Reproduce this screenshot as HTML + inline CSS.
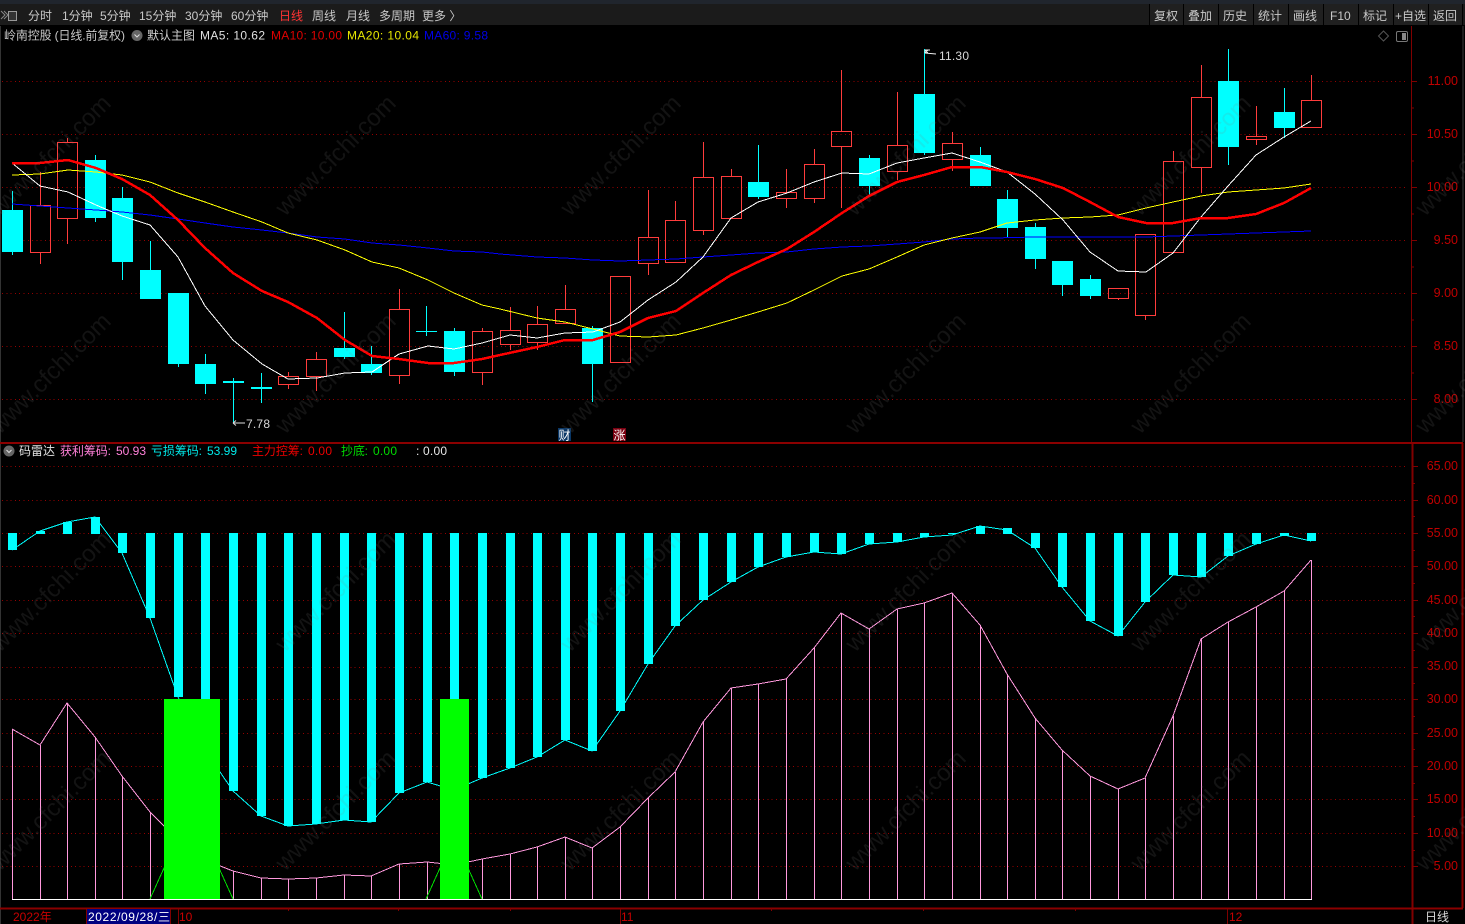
<!DOCTYPE html>
<html><head><meta charset="utf-8"><title>K线</title>
<style>
html,body{margin:0;padding:0;background:#000;width:1465px;height:924px;overflow:hidden}
svg{display:block;position:absolute;left:0;top:0}
text{font-family:"Liberation Sans","Noto Sans CJK SC",sans-serif;font-size:12px}
.a text{font-size:12.5px;fill:#c00000;text-anchor:end}
.t text{fill:#c8c8c8}
.w text{font-size:24px;fill:rgba(128,128,128,.15)}
polyline{shape-rendering:crispEdges}
</style></head><body>
<svg width="1465" height="924" viewBox="0 0 1465 924" xmlns="http://www.w3.org/2000/svg">
<rect width="1465" height="924" fill="#000"/>
<!-- toolbar -->
<rect width="1465" height="4" fill="#20252d"/>
<rect y="4" width="1465" height="21" fill="#1b1b1b"/>
<path d="M1 11l4 4-4 4M4 11l4 4-4 4" fill="none" stroke="#888"/>
<rect x="8.500" y="11.500" width="8" height="9" fill="#333" stroke="#999"/>
<g fill="#202020"><rect x="1150" y="4" width="33" height="21"/><rect x="1184" y="4" width="34" height="21"/><rect x="1219" y="4" width="34" height="21"/><rect x="1254" y="4" width="34" height="21"/><rect x="1289" y="4" width="34" height="21"/><rect x="1324" y="4" width="34" height="21"/><rect x="1359" y="4" width="34" height="21"/><rect x="1394" y="4" width="34" height="21"/><rect x="1429" y="4" width="33" height="21"/></g>
<path d="M1149.500 4V25M1183.500 4V25M1218.500 4V25M1253.500 4V25M1288.500 4V25M1323.500 4V25M1358.500 4V25M1393.500 4V25M1428.500 4V25M1462.500 4V25" stroke="#000"/>
<g class="t">
<text x="28" y="20">分时</text><text x="62" y="20">1分钟</text><text x="100" y="20">5分钟</text><text x="139" y="20">15分钟</text><text x="185" y="20">30分钟</text><text x="231" y="20">60分钟</text><text x="279" y="20" style="fill:#ff3333">日线</text><text x="312" y="20">周线</text><text x="346" y="20">月线</text><text x="379" y="20">多周期</text><text x="422" y="20">更多 〉</text>
<text x="1154" y="20">复权</text><text x="1188" y="20">叠加</text><text x="1223" y="20">历史</text><text x="1258" y="20">统计</text><text x="1293" y="20">画线</text><text x="1330" y="20">F10</text><text x="1363" y="20">标记</text><text x="1395" y="20">+自选</text><text x="1433" y="20">返回</text>
</g>
<!-- frame -->
<path d="M0.500 26V924" stroke="#333"/>
<path d="M1463 26V442" stroke="#3a3a3a"/>
<path d="M1411.500 26V442" stroke="#800000"/>
<path d="M1412.500 443V924M1462.500 443V908" stroke="#800000" stroke-width="2"/>
<path d="M0 443H1463M0 908.500H1463" stroke="#8b0000" stroke-width="2"/>
<!-- grid -->
<path shape-rendering="crispEdges" d="M2 81.500H1408M2 134.500H1408M2 187.500H1408M2 240.500H1408M2 293.500H1408M2 346.500H1408M2 399.500H1408M2 466.500H1408M2 500.500H1408M2 533.500H1408M2 566.500H1408M2 600.500H1408M2 633.500H1408M2 667.500H1408M2 699.500H1408M2 733.500H1408M2 766.500H1408M2 799.500H1408M2 833.500H1408M2 866.500H1408" stroke="#950000" stroke-dasharray="1 3.300"/>
<!-- axis ticks -->
<path shape-rendering="crispEdges" stroke="#800000" d="M1411 81.500h6M1411 134.500h6M1411 187.500h6M1411 240.500h6M1411 293.500h6M1411 346.500h6M1411 399.500h6M1411 108h3M1411 161h3M1411 214h3M1411 267h3M1411 320h3M1411 373h3M1412 466.500h6M1412 500.500h6M1412 533.500h6M1412 566.500h6M1412 600.500h6M1412 633.500h6M1412 667.500h6M1412 699.500h6M1412 733.500h6M1412 766.500h6M1412 799.500h6M1412 833.500h6M1412 866.500h6M1412 483.500h3M1412 516.500h3M1412 550.500h3M1412 583.500h3M1412 616.500h3M1412 650.500h3M1412 683.500h3M1412 716.500h3M1412 749.500h3M1412 783.500h3M1412 816.500h3M1412 850.500h3"/>
<g class="a">
<text x="1458" y="85">11.00</text><text x="1458" y="138">10.50</text><text x="1458" y="191">10.00</text><text x="1458" y="244">9.50</text><text x="1458" y="297">9.00</text><text x="1458" y="350">8.50</text><text x="1458" y="403">8.00</text>
<text x="1458" y="470">65.00</text><text x="1458" y="504">60.00</text><text x="1458" y="537">55.00</text><text x="1458" y="570">50.00</text><text x="1458" y="604">45.00</text><text x="1458" y="637">40.00</text><text x="1458" y="670">35.00</text><text x="1458" y="703">30.00</text><text x="1458" y="737">25.00</text><text x="1458" y="770">20.00</text><text x="1458" y="803">15.00</text><text x="1458" y="837">10.00</text><text x="1458" y="870">5.00</text>
</g>
<!-- info row -->
<text x="4" y="39.500" fill="#c8c8c8" textLength="121">岭南控股 (日线.前复权)</text>
<circle cx="137" cy="35.500" r="5.500" fill="#666"/><path d="M134.500 34.500l2.500 2.500 2.500-2.500" fill="none" stroke="#ddd"/>
<text x="147" y="39.500" fill="#d0d0d0">默认主图</text>
<text x="200" y="39.500" fill="#e0e0e0" textLength="65">MA5: 10.62</text>
<text x="271" y="39.500" fill="#e00000" textLength="71">MA10: 10.00</text>
<text x="347" y="39.500" fill="#e8e800" textLength="72">MA20: 10.04</text>
<text x="424" y="39.500" fill="#0000e8" textLength="64">MA60: 9.58</text>
<path d="M1383.500 31l5 5-5 5-5-5z" fill="none" stroke="#555"/>
<rect x="1396.500" y="31.500" width="11" height="10" rx="1.500" fill="none" stroke="#777"/><rect x="1402" y="33" width="4" height="7" fill="#888"/>
<!-- candles: wicks -->
<path shape-rendering="crispEdges" fill="none" stroke="#ff3c3c" d="M40.500 172V205M40.500 252V264M67.500 138V142M67.500 218V244M288.500 372V376M288.500 384V389M316.500 352V359M316.500 376V391M399.500 289V309M399.500 375V384M482.500 328V331M482.500 372V385M510.500 307V330M510.500 344V350M537.500 306V324M537.500 342V350M565.500 285V309M648.500 190V237M648.500 263V275M675.500 201V220M703.500 142V177M703.500 230V235M731.500 169V176M786.500 169V192M786.500 198V208M814.500 149V164M814.500 198V203M841.500 70V131M841.500 146V208M897.500 92V145M897.500 171V180M952.500 132V143M952.500 159V171M1118.500 298V300M1145.500 315V320M1173.500 151V161M1201.500 65V97M1201.500 167V193M1256.500 106V136M1256.500 139V145M1311.500 75V100"/>
<g shape-rendering="crispEdges" fill="none" stroke="#ff3c3c">
<rect x="30.500" y="205.500" width="20" height="47"/><rect x="57.500" y="142.500" width="20" height="76"/><rect x="278.500" y="376.500" width="20" height="8"/><rect x="306.500" y="359.500" width="20" height="17"/><rect x="389.500" y="309.500" width="20" height="66"/><rect x="472.500" y="331.500" width="20" height="41"/><rect x="500.500" y="330.500" width="20" height="14"/><rect x="527.500" y="324.500" width="20" height="18"/><rect x="555.500" y="309.500" width="20" height="14"/><rect x="610.500" y="276.500" width="20" height="86"/><rect x="638.500" y="237.500" width="20" height="26"/><rect x="665.500" y="220.500" width="20" height="42"/><rect x="693.500" y="177.500" width="20" height="53"/><rect x="721.500" y="176.500" width="20" height="42"/><rect x="776.500" y="192.500" width="20" height="6"/><rect x="804.500" y="164.500" width="20" height="34"/><rect x="831.500" y="131.500" width="20" height="15"/><rect x="887.500" y="145.500" width="20" height="26"/><rect x="942.500" y="143.500" width="20" height="16"/><rect x="1108.500" y="288.500" width="20" height="10"/><rect x="1135.500" y="234.500" width="20" height="81"/><rect x="1163.500" y="161.500" width="20" height="91"/><rect x="1191.500" y="97.500" width="20" height="70"/><rect x="1246.500" y="136.500" width="20" height="3"/><rect x="1301.500" y="100.500" width="20" height="27"/>
</g>
<path shape-rendering="crispEdges" stroke="#0ff" fill="none" d="M12.500 191V255M95.500 155V222M122.500 187V280M150.500 241V299M178.500 293V367M205.500 354V394M233.500 378V423M261.500 373V403M344.500 312V359M371.500 346V375M426.500 306V336M454.500 328V376M592.500 326V402M758.500 145V199M869.500 155V195M924.500 49V155M980.500 147V186M1007.500 190V237M1035.500 223V269M1062.500 261V296M1090.500 275V299M1228.500 49V165M1284.500 88V138"/>
<g shape-rendering="crispEdges" fill="#0ff">
<rect x="2" y="210" width="21" height="42"/><rect x="85" y="160" width="21" height="58"/><rect x="112" y="198" width="21" height="64"/><rect x="140" y="270" width="21" height="29"/><rect x="168" y="293" width="21" height="71"/><rect x="195" y="364" width="21" height="20"/><rect x="223" y="381" width="21" height="2"/><rect x="251" y="387" width="21" height="2"/><rect x="334" y="348" width="21" height="9"/><rect x="361" y="364" width="21" height="9"/><rect x="416" y="331" width="21" height="1"/><rect x="444" y="331" width="21" height="41"/><rect x="582" y="328" width="21" height="36"/><rect x="748" y="182" width="21" height="15"/><rect x="859" y="158" width="21" height="28"/><rect x="914" y="94" width="21" height="59"/><rect x="970" y="155" width="21" height="31"/><rect x="997" y="199" width="21" height="29"/><rect x="1025" y="227" width="21" height="32"/><rect x="1052" y="261" width="21" height="24"/><rect x="1080" y="279" width="21" height="17"/><rect x="1218" y="81" width="21" height="66"/><rect x="1274" y="112" width="21" height="16"/>
</g>
<!-- MA lines -->
<polyline fill="none" stroke="#0000ff" stroke-width="1" points="12,204 40,206 68,208 96,210 122,212 150,215 178,219 205,223 233,227 262,230 288,233 317,237 345,239 372,243 399,245 428,248 454,251 482,252 500,254 537,257 565,258 593,260 620,261 648,260 676,259 703,257 731,255 758,253 787,252 814,249 842,247 869,246 897,244 924,242 952,239 980,238 993,238 1035,237 1146,237 1201,235 1256,233 1311,231"/>
<polyline fill="none" stroke="#ffff00" stroke-width="1" points="12,175 40,174 68,170 96,172 122,175 150,182 178,193 205,202 233,212 262,222 288,233 317,240 345,250 372,262 399,268 428,280 454,293 482,305 500,309 537,318 565,322 593,329 620,336 648,337 676,335 703,328 731,320 758,312 787,303 814,290 842,276 869,269 897,257 924,245 952,238 980,232 1007,223 1035,220 1063,218 1090,217 1118,215 1146,208 1173,202 1201,196 1228,192 1256,190 1284,188 1311,184"/>
<polyline fill="none" stroke="#fff" stroke-width="1" points="12,163 40,186 68,192 96,205 122,216 150,225 178,257 205,306 233,340 262,364 288,379 317,378 345,373 372,372 399,354 428,346 454,349 482,343 510,335 537,338 565,333 593,332 620,322 648,300 676,282 703,257 731,218 758,202 787,193 814,182 842,173 869,174 897,163 924,158 952,153 980,162 1007,172 1035,194 1063,220 1090,252 1118,271 1146,272 1173,253 1201,217 1228,186 1256,155 1284,137 1311,121"/>
<polyline fill="none" stroke="#ff0000" stroke-width="2.500" points="12,163 40,163 68,160 96,168 122,179 150,195 178,220 205,248 233,273 262,291 288,302 317,318 345,340 372,356 399,359 428,363 454,363 482,359 500,355 537,347 565,340 593,340 620,332 648,318 676,311 703,293 731,275 758,262 787,249 814,232 842,213 869,196 897,182 924,175 952,167 980,167 1007,172 1035,179 1063,188 1090,202 1118,217 1146,223 1173,223 1201,218 1228,218 1256,214 1284,203 1311,188"/>
<!-- hi/lo labels -->
<path d="M925 53l11 1M925 50v3M925 50h5M925 53l3-3M925 50l3 3" fill="none" stroke="#eee" stroke-width=".9"/>
<text x="939" y="60" fill="#d8d8d8" textLength="30">11.30</text>
<path d="M233 423h12M233 423l3-2.500M233 423l3 2.500" fill="none" stroke="#ddd"/>
<text x="246" y="428" fill="#d8d8d8" textLength="24">7.78</text>
<rect x="558" y="428" width="13" height="13" fill="#0a3766"/><text x="558.500" y="439.500" fill="#fff">财</text>
<rect x="613" y="428" width="13" height="13" fill="#7a0010"/><text x="613.500" y="439.500" fill="#fff">涨</text>
<!-- indicator info -->
<circle cx="9" cy="451" r="5.500" fill="#666"/><path d="M6.500 450l2.500 2.500 2.500-2.500" fill="none" stroke="#ddd"/>
<text x="19" y="455" fill="#e4e4e4">码雷达</text>
<text x="60" y="455" fill="#ff80d8" textLength="51">获利筹码:</text><text x="116" y="455" fill="#ff80d8" textLength="30">50.93</text>
<text x="151" y="455" fill="#00e8e8" textLength="51">亏损筹码:</text><text x="207" y="455" fill="#00e8e8" textLength="30">53.99</text>
<text x="252" y="455" fill="#ee0000" textLength="51">主力控筹:</text><text x="308" y="455" fill="#ee0000" textLength="24">0.00</text>
<text x="341" y="455" fill="#00dd00" textLength="27">抄底:</text><text x="373" y="455" fill="#00dd00" textLength="24">0.00</text>
<text x="416" y="455" fill="#e8e8e8" textLength="31">: 0.00</text>
<!-- cyan bars -->
<g shape-rendering="crispEdges" fill="#0ff">
<rect x="8" y="533" width="9" height="17"/><rect x="36" y="531" width="9" height="3"/><rect x="63" y="522" width="9" height="12"/><rect x="91" y="517" width="9" height="17"/><rect x="118" y="533" width="9" height="20"/><rect x="146" y="533" width="9" height="85"/><rect x="174" y="533" width="9" height="164"/><rect x="201" y="533" width="9" height="170"/><rect x="229" y="533" width="9" height="258"/><rect x="257" y="533" width="9" height="283"/><rect x="284" y="533" width="9" height="293"/><rect x="312" y="533" width="9" height="291"/><rect x="340" y="533" width="9" height="287"/><rect x="367" y="533" width="9" height="289"/><rect x="395" y="533" width="9" height="260"/><rect x="423" y="533" width="9" height="249"/><rect x="450" y="533" width="9" height="170"/><rect x="478" y="533" width="9" height="245"/><rect x="506" y="533" width="9" height="235"/><rect x="533" y="533" width="9" height="224"/><rect x="561" y="533" width="9" height="207"/><rect x="588" y="533" width="9" height="218"/><rect x="616" y="533" width="9" height="178"/><rect x="644" y="533" width="9" height="131"/><rect x="671" y="533" width="9" height="93"/><rect x="699" y="533" width="9" height="67"/><rect x="727" y="533" width="9" height="49"/><rect x="754" y="533" width="9" height="34"/><rect x="782" y="533" width="9" height="24"/><rect x="810" y="533" width="9" height="19"/><rect x="837" y="533" width="9" height="21"/><rect x="865" y="533" width="9" height="11"/><rect x="893" y="533" width="9" height="9"/><rect x="920" y="533" width="9" height="4"/><rect x="948" y="533" width="9" height="1"/><rect x="976" y="526" width="9" height="8"/><rect x="1003" y="528" width="9" height="6"/><rect x="1031" y="533" width="9" height="15"/><rect x="1058" y="533" width="9" height="54"/><rect x="1086" y="533" width="9" height="88"/><rect x="1114" y="533" width="9" height="103"/><rect x="1141" y="533" width="9" height="69"/><rect x="1169" y="533" width="9" height="42"/><rect x="1197" y="533" width="9" height="44"/><rect x="1224" y="533" width="9" height="23"/><rect x="1252" y="533" width="9" height="11"/><rect x="1280" y="533" width="9" height="3"/><rect x="1307" y="533" width="9" height="8"/>
</g>
<polyline fill="none" stroke="#0ff" stroke-width="1" points="12,550 40,531 67,522 95,517 122,553 150,618 178,697 205,750 233,791 261,816 288,826 316,824 344,820 371,822 399,793 427,782 454,790 482,778 510,768 537,757 565,740 592,751 620,711 648,664 675,626 703,600 731,582 758,567 786,557 814,552 841,554 869,544 897,542 924,537 952,535 980,526 1007,530 1035,548 1062,587 1090,621 1118,636 1145,602 1173,575 1201,577 1228,556 1256,544 1284,535 1311,541"/>
<!-- pink -->
<path shape-rendering="crispEdges" stroke="#ff99dd" fill="none" d="M12.500 729V899M40.500 745V899M67.500 703V899M95.500 737V899M122.500 776V899M150.500 812V899M233.500 871V899M261.500 878V899M288.500 879V899M316.500 878V899M344.500 875V899M371.500 876V899M399.500 864V899M427.500 862V899M482.500 859V899M510.500 854V899M537.500 847V899M565.500 837V899M592.500 848V899M620.500 827V899M648.500 798V899M675.500 772V899M703.500 722V899M731.500 688V899M758.500 684V899M786.500 679V899M814.500 648V899M841.500 613V899M869.500 629V899M897.500 609V899M924.500 603V899M952.500 593V899M980.500 625V899M1007.500 674V899M1035.500 718V899M1062.500 750V899M1090.500 776V899M1118.500 789V899M1145.500 778V899M1173.500 716V899M1201.500 639V899M1228.500 622V899M1256.500 607V899M1284.500 591V899M1311.500 560V899"/>
<polyline fill="none" stroke="#ff99dd" stroke-width="1" points="12,729 40,745 67,703 95,737 122,776 150,812 178,840 205,860 233,871 261,878 288,879 316,878 344,875 371,876 399,864 427,862 454,865 482,859 510,854 537,847 565,837 592,848 620,827 648,798 675,772 703,722 731,688 758,684 786,679 814,648 841,613 869,629 897,609 924,603 952,593 980,625 1007,674 1035,718 1062,750 1090,776 1118,789 1145,778 1173,716 1201,639 1228,622 1256,607 1284,591 1311,560"/>
<!-- green -->
<path shape-rendering="crispEdges" d="M150 899L178 837M205 837L233 899M426 899L454 837M454 837L482 899" fill="none" stroke="#00e000"/>
<g shape-rendering="crispEdges" fill="#00ff00"><rect x="164" y="699" width="56" height="200"/><rect x="440" y="699" width="29" height="200"/></g>
<path shape-rendering="crispEdges" d="M12 899.500H1312" stroke="#fff"/>
<!-- bottom axis -->
<rect x="87" y="909" width="84" height="15" fill="#000080"/>
<path shape-rendering="crispEdges" stroke="#800000" d="M86.500 909V924M170.500 909V924M178.500 909V924M620.500 909V924M1227.500 909V924M288.500 908V911M398.500 908V911M510.500 908V911M771.500 908V911M923.500 908V911M1075.500 908V911"/>
<text x="13" y="921" fill="#c80000">2022年</text>
<text x="88" y="921" fill="#fff" textLength="82">2022/09/28/三</text>
<text x="179" y="921" fill="#c80000">10</text>
<text x="621" y="921" fill="#c80000">11</text>
<text x="1229" y="921" fill="#c80000">12</text>
<text x="1425" y="921" fill="#d8d8d8">日线</text>
<!-- watermark -->
<g class="w">
<text transform="translate(0 217) rotate(-45)">www.cfchi.com</text><text transform="translate(285 217) rotate(-45)">www.cfchi.com</text><text transform="translate(570 217) rotate(-45)">www.cfchi.com</text><text transform="translate(855 217) rotate(-45)">www.cfchi.com</text><text transform="translate(1140 217) rotate(-45)">www.cfchi.com</text><text transform="translate(1425 217) rotate(-45)">www.cfchi.com</text>
<text transform="translate(0 435) rotate(-45)">www.cfchi.com</text><text transform="translate(285 435) rotate(-45)">www.cfchi.com</text><text transform="translate(570 435) rotate(-45)">www.cfchi.com</text><text transform="translate(855 435) rotate(-45)">www.cfchi.com</text><text transform="translate(1140 435) rotate(-45)">www.cfchi.com</text><text transform="translate(1425 435) rotate(-45)">www.cfchi.com</text>
<text transform="translate(0 653) rotate(-45)">www.cfchi.com</text><text transform="translate(285 653) rotate(-45)">www.cfchi.com</text><text transform="translate(570 653) rotate(-45)">www.cfchi.com</text><text transform="translate(855 653) rotate(-45)">www.cfchi.com</text><text transform="translate(1140 653) rotate(-45)">www.cfchi.com</text><text transform="translate(1425 653) rotate(-45)">www.cfchi.com</text>
<text transform="translate(0 872) rotate(-45)">www.cfchi.com</text><text transform="translate(285 872) rotate(-45)">www.cfchi.com</text><text transform="translate(570 872) rotate(-45)">www.cfchi.com</text><text transform="translate(855 872) rotate(-45)">www.cfchi.com</text><text transform="translate(1140 872) rotate(-45)">www.cfchi.com</text><text transform="translate(1425 872) rotate(-45)">www.cfchi.com</text>
</g>
</svg>
</body></html>
